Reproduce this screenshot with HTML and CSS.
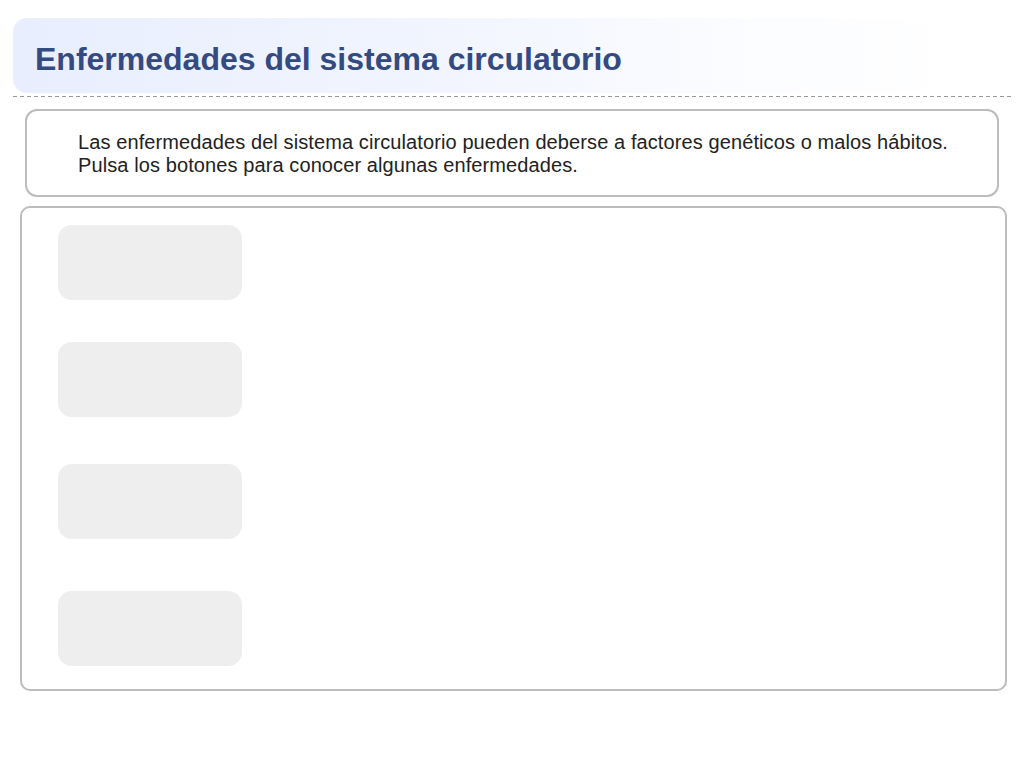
FILE: index.html
```html
<!DOCTYPE html>
<html lang="es">
<head>
<meta charset="utf-8">
<title>Enfermedades del sistema circulatorio</title>
<link rel="stylesheet" href="styles.css">
</head>
<body>
<div class="page">
  <header class="header">
    <h1 class="title">Enfermedades del sistema circulatorio</h1>
  </header>
  <div class="divider"></div>
  <div class="intro">
    <p>Las enfermedades del sistema circulatorio pueden deberse a factores genéticos o malos hábitos.<br>Pulsa los botones para conocer algunas enfermedades.</p>
  </div>
  <div class="panel">
    <div class="btn b1"></div>
    <div class="btn b2"></div>
    <div class="btn b3"></div>
    <div class="btn b4"></div>
  </div>
</div>
</body>
</html>
```
FILE: styles.css
```css
* { box-sizing: border-box; }
html, body { margin: 0; padding: 0; background: #fff; }
body { font-family: "Liberation Sans", Arial, sans-serif; width: 1024px; height: 768px; overflow: hidden; }
.page { padding-top: 18px; }
.header {
  margin-left: 13px;
  width: 967px;
  height: 75px;
  border-radius: 14px 0 0 14px;
  background: linear-gradient(to right, #e8eefe 0%, #f2f5fe 45%, #fbfcff 75%, #ffffff 100%);
  display: flex;
  align-items: center;
  padding-left: 22px;
}
.title {
  margin: 0;
  font-size: 32px;
  font-weight: bold;
  color: #344b82;
  padding-top: 8px;
}
.divider {
  margin: 3px 0 0 13px;
  width: 998px;
  height: 1px;
  background: repeating-linear-gradient(to right, #999 0 4px, transparent 4px 7px);
}
.intro {
  margin: 12px 0 0 25px;
  width: 974px;
  height: 88px;
  border: 2px solid #bcbcbc;
  border-radius: 12px;
  padding: 20px 0 0 51px;
}
.intro p {
  margin: 0;
  font-size: 20px;
  line-height: 23px;
  letter-spacing: 0.1px;
  color: #222;
}
.panel {
  margin: 9px 0 0 20px;
  width: 987px;
  height: 485px;
  border: 2px solid #bcbcbc;
  border-radius: 10px;
  padding: 17px 0 0 36px;
  display: flex;
  flex-direction: column;
}
.btn {
  width: 184px;
  height: 75px;
  border-radius: 14px;
  background: #eeeeee;
}
.b2 { margin-top: 42px; }
.b3 { margin-top: 47px; }
.b4 { margin-top: 52px; }
```
